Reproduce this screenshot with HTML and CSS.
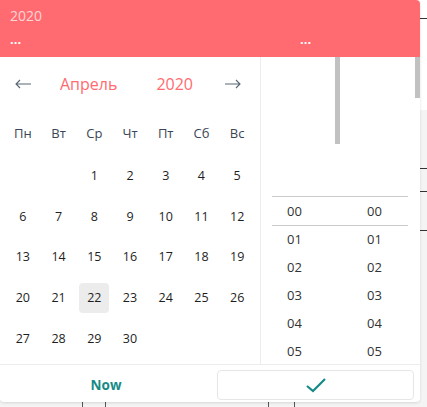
FILE: index.html
```html
<!DOCTYPE html>
<html lang="ru">
<head>
<meta charset="utf-8">
<link rel="stylesheet" href="styles.css">
</head>
<body>
<div class="page">
  <div class="page-top"><div class="rule"></div></div>
  <div class="page-main">
    <div class="rule r1"></div>
    <div class="rule r2"></div>
    <div class="rule r3"></div>
    <div class="cols">
      <div class="col c1"></div>
      <div class="col c2"></div>
      <div class="col c3"></div>
      <div class="col c4"></div>
      <div class="col c5"></div>
    </div>
  </div>
</div>

<div class="dialog">
  <div class="head">
    <div class="head-year">2020</div>
    <div class="head-row">
      <span class="head-date">...</span>
      <span class="head-time">...</span>
    </div>
  </div>
  <div class="body">
    <div class="cal">
      <div class="nav">
        <svg class="arrow" width="16" height="10" viewBox="0 0 16 10"><path d="M16 5H1M5 1L1 5L5 9" fill="none" stroke="#5b6675" stroke-width="1.1"/></svg>
        <div class="title"><span class="month">Апрель</span><span class="year">2020</span></div>
        <svg class="arrow" width="16" height="10" viewBox="0 0 16 10"><path d="M0 5H15M11 1L15 5L11 9" fill="none" stroke="#5b6675" stroke-width="1.1"/></svg>
      </div>
      <div class="grid weekdays">
        <span>Пн</span><span>Вт</span><span>Ср</span><span>Чт</span><span>Пт</span><span>Сб</span><span>Вс</span>
      </div>
      <div class="grid days">
        <span></span><span></span><span>1</span><span>2</span><span>3</span><span>4</span><span>5</span>
        <span>6</span><span>7</span><span>8</span><span>9</span><span>10</span><span>11</span><span>12</span>
        <span>13</span><span>14</span><span>15</span><span>16</span><span>17</span><span>18</span><span>19</span>
        <span>20</span><span>21</span><span class="sel"><b>22</b></span><span>23</span><span>24</span><span>25</span><span>26</span>
        <span>27</span><span>28</span><span>29</span><span>30</span><span></span><span></span><span></span>
      </div>
    </div>
    <div class="time">
      <div class="tcol hours">
        <div class="list">
          <div>00</div><div>01</div><div>02</div><div>03</div><div>04</div><div>05</div>
        </div>
        <div class="track"><div class="thumb"></div></div>
      </div>
      <div class="tcol minutes">
        <div class="list">
          <div>00</div><div>01</div><div>02</div><div>03</div><div>04</div><div>05</div>
        </div>
        <div class="track"><div class="thumb"></div></div>
      </div>
      <div class="band"></div>
    </div>
  </div>
  <div class="foot">
    <button class="btn now">Now</button>
    <button class="btn ok"><svg width="20" height="16" viewBox="0 0 20 16"><path d="M1 9L7 14L19 2" fill="none" stroke="#168a86" stroke-width="2.2"/></svg></button>
  </div>
</div>
</body>
</html>
```

FILE: styles.css
```css
html, body {
  margin: 0;
  padding: 0;
}
body {
  width: 427px;
  height: 407px;
  overflow: hidden;
  position: relative;
  background: #f4f4f4;
  font-family: "Open Sans", "Noto Sans", sans-serif;
}

/* background page peeking out */
.page-top {
  height: 110px;
  background: #fff;
  padding-top: 18px;
  box-sizing: border-box;
}
.rule {
  height: 1px;
  background: #333;
}
.page-main {
  padding-top: 58px;
}
.r2 { margin-top: 22px; }
.r3 { margin-top: 38px; }
.cols {
  display: flex;
  height: 176px;
}
.col { border-left: 1px solid #555; }
.c1 { width: 82px; border-left: none; }
.c2 { width: 22px; }
.c3 { width: 162px; }
.c4 { width: 25px; }
.c5 { flex: 1; }

/* dialog */
.dialog {
  position: absolute;
  left: 0;
  top: 0;
  width: 420px;
  height: 402px;
  background: #fff;
  border-radius: 0 4px 4px 4px;
  box-shadow: 0 1px 3px rgba(0,0,0,0.12);
  overflow: hidden;
  display: flex;
  flex-direction: column;
}

.head {
  height: 57px;
  flex: none;
  box-sizing: border-box;
  padding: 8px 10px 0;
  background: #ff6b70;
  color: #fff;
}
.head-year {
  font-size: 14px;
  line-height: 16px;
  color: rgba(255,255,255,0.72);
}
.head-row {
  display: flex;
  margin-top: 7px;
  font-size: 13px;
  font-weight: 700;
  line-height: 16px;
}
.head-date { width: 290px; }

.body {
  flex: none;
  height: 307px;
  display: flex;
  overflow: hidden;
}

.cal {
  width: 250px;
  padding: 0 5px;
  border-right: 1px solid #ececec;
  flex: none;
}
.nav {
  height: 54px;
  display: flex;
  align-items: center;
  padding: 0 14px 0 10px;
}
.arrow { flex: none; display: block; }
.title {
  flex: 1;
  display: flex;
  gap: 39px;
  padding-left: 29px;
  font-size: 16px;
  color: #ff6b70;
}
.grid {
  display: grid;
  grid-template-columns: repeat(7, 1fr);
  text-align: center;
}
.weekdays {
  height: 44px;
  align-items: center;
  font-size: 13px;
  color: #3a4656;
}
.days {
  grid-auto-rows: 40.75px;
  align-items: center;
  font-size: 12.5px;
  color: #1e1e1e;
}
.days span {
  display: flex;
  justify-content: center;
  align-items: center;
}
.days .sel b {
  font-weight: 400;
  width: 30px;
  height: 30px;
  line-height: 30px;
  border-radius: 4px;
  background: #ececec;
}

.time {
  flex: 1;
  display: flex;
  position: relative;
  height: 307px;
  overflow: hidden;
}
.tcol {
  height: 307px;
  display: flex;
  overflow: hidden;
}
.hours { width: 79px; }
.minutes { flex: 1; }
.list {
  flex: 1;
  padding-top: 140px;
  font-size: 13px;
  color: #333;
}
.hours .list { padding-left: 26px; }
.minutes .list { padding-left: 27px; }
.list div {
  height: 28px;
  line-height: 28px;
}
.track {
  width: 5px;
  flex: none;
}
.thumb { background: #c1c1c1; }
.hours .thumb { height: 87px; }
.minutes .thumb { height: 41px; }

.band {
  position: absolute;
  top: 139px;
  left: 11px;
  right: 12px;
  height: 28px;
  border-top: 1px solid #cacaca;
  border-bottom: 1px solid #cacaca;
  pointer-events: none;
}

.foot {
  flex: none;
  height: 38px;
  box-sizing: border-box;
  border-top: 1px solid #ececec;
  padding: 5px 6px 2px 0;
  display: flex;
  gap: 5px;
}
.btn {
  font-family: inherit;
  background: #fff;
  border: none;
  padding: 0;
  margin: 0;
  height: 30px;
  display: flex;
  align-items: center;
  justify-content: center;
}
.now {
  width: 212px;
  font-size: 13.5px;
  font-weight: 700;
  color: #168a86;
}
.ok {
  flex: 1;
  border: 1px solid #e6e6e6;
  border-radius: 4px;
}
.ok svg { display: block; margin-left: 1px; }
```
